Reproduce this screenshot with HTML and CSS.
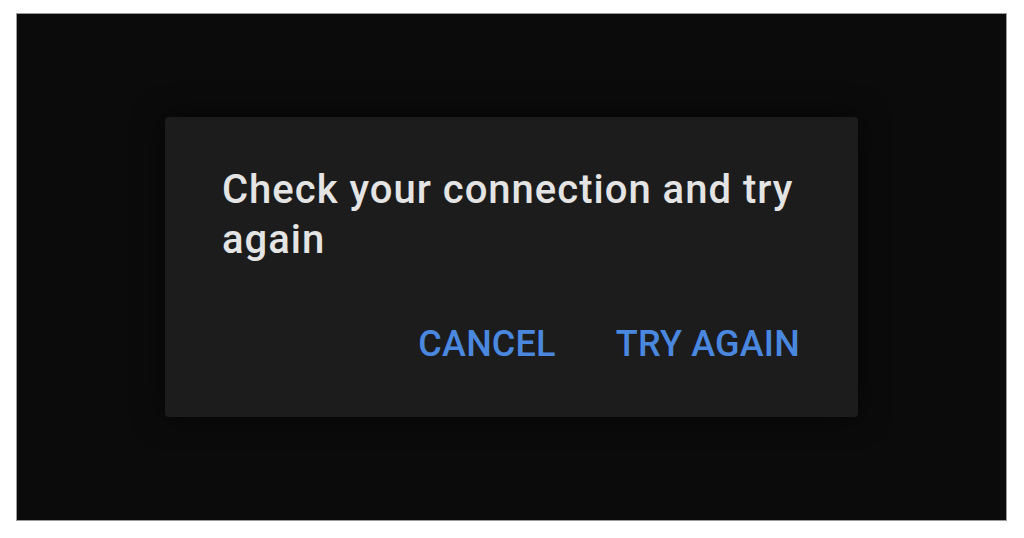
FILE: index.html
```html
<!DOCTYPE html>
<html>
<head>
<meta charset="utf-8">
<link rel="stylesheet" href="styles.css">
</head>
<body>
<div class="frame">
  <div class="dialog">
    <p class="message">Check your connection and try again</p>
    <div class="actions">
      <button class="btn">CANCEL</button>
      <button class="btn">TRY AGAIN</button>
    </div>
  </div>
</div>
</body>
</html>
```

FILE: styles.css
```css
html, body {
  margin: 0;
  padding: 0;
  background: #ffffff;
  width: 1024px;
  height: 538px;
  overflow: hidden;
}
.frame {
  box-sizing: border-box;
  margin: 13px 17px 0 16px;
  width: 991px;
  height: 508px;
  background: #0b0b0b;
  border: 1px solid #9a9a9a;
  display: flex;
  align-items: center;
  justify-content: center;
}
.dialog {
  box-sizing: border-box;
  width: 693px;
  height: 300px;
  background: #1c1c1c;
  border-radius: 4px;
  box-shadow: 0 0 30px rgba(0,0,0,0.6);
  padding: 48px 58px 0 57px;
  display: flex;
  flex-direction: column;
  font-family: Roboto, "Liberation Sans", sans-serif;
}
.message {
  margin: 0;
  color: #e4e4e4;
  font-size: 40px;
  line-height: 50px;
  font-weight: 500;
  letter-spacing: 1px;
  width: 600px;
}
.actions {
  display: flex;
  justify-content: flex-end;
  gap: 60px;
  margin-top: 55px;
}
.btn {
  background: none;
  border: none;
  padding: 0;
  color: #4a88e0;
  font-family: Roboto, "Liberation Sans", sans-serif;
  font-size: 36px;
  font-weight: 500;
  line-height: 48px;
  letter-spacing: 0.2px;
}
```
